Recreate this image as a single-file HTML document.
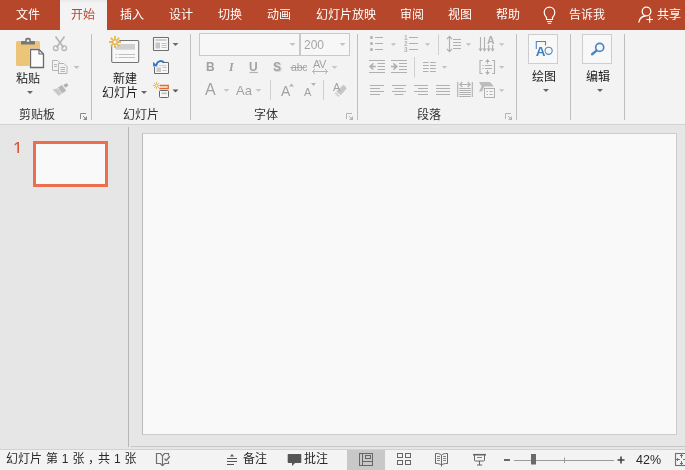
<!DOCTYPE html>
<html lang="zh-CN">
<head>
<meta charset="utf-8">
<title>PowerPoint</title>
<style>
*{margin:0;padding:0;box-sizing:border-box}
html,body{width:685px;height:470px;overflow:hidden;background:#e6e6e6}
body{position:relative;font-weight:350;font-family:"Liberation Sans","Noto Sans CJK SC",sans-serif;font-size:12px;color:#262626}
.abs{position:absolute}
#tabs{left:0;top:0;width:685px;height:30px;background:#b7472a}
.tab{position:absolute;font-weight:400;top:2px;height:27px;line-height:27px;color:#fff;font-size:12px;white-space:nowrap}
#tab-active{left:60px;top:0;width:47px;height:30px;background:#f3f3f3;border-top:2px solid #ececec}
#ribbon{left:0;top:30px;width:685px;height:95px;background:#f3f3f3;border-bottom:1px solid #d2d2d2}
.sep{position:absolute;top:34px;width:1px;height:86px;background:#bebebe}
.glabel{position:absolute;top:106px;height:18px;line-height:18px;font-size:12px;color:#333;font-weight:400;white-space:nowrap}
.btxt{position:absolute;font-size:12px;line-height:14px;color:#1c1c1c;font-weight:400;white-space:nowrap}
.g{color:#a2a2a2}
.tab,.btxt,.glabel,.st,.g,#num,.gs{will-change:transform}
.dd{position:absolute;width:0;height:0;border-left:3px solid transparent;border-right:3px solid transparent;border-top:3px solid #b5b5b5}
.ddk{border-top-color:#666}
#panel{left:0;top:125px;width:129px;height:324px;background:#e6e6e6}
#pdiv{left:128px;top:127px;width:1px;height:320px;background:#b6b6b6}
#work{left:129px;top:125px;width:556px;height:324px;background:#e6e6e6}
#slide{left:142px;top:133px;width:535px;height:302px;background:#f9f9f9;border:1px solid #cbcbcb;border-left-color:#bbb}
#thumb{left:33px;top:141px;width:75px;height:46px;background:#f9f9f9;border:3px solid #ed6e4e}
#num{left:12.5px;top:139px;width:10px;height:14px;overflow:hidden;font-size:17.5px;line-height:17px;color:#d8532f}
#num span{position:absolute;left:0;top:1.5px}
#status{left:0;top:449px;width:685px;height:21px;background:#f3f3f3;border-top:1px solid #d2d2d2}
#wline{left:131px;top:446px;width:554px;height:1px;background:#c6c6c6}
.st{position:absolute;top:449px;height:21px;line-height:20px;font-size:12px;color:#2a2a2a;font-weight:400;white-space:nowrap}
svg{position:absolute;overflow:visible}
</style>
</head>
<body>
<div id="tabs" class="abs"></div>
<div id="tab-active" class="abs"></div>
<div class="tab" style="left:16px">文件</div>
<div class="tab" style="left:71px;color:#b7472a;font-weight:400">开始</div>
<div class="tab" style="left:120px">插入</div>
<div class="tab" style="left:169px">设计</div>
<div class="tab" style="left:218px">切换</div>
<div class="tab" style="left:267px">动画</div>
<div class="tab" style="left:316px">幻灯片放映</div>
<div class="tab" style="left:399.500px">审阅</div>
<div class="tab" style="left:447.500px">视图</div>
<div class="tab" style="left:496px">帮助</div>
<div class="tab" style="left:569px">告诉我</div>
<div class="tab" style="left:657px">共享</div>

<div id="ribbon" class="abs"></div>
<div class="sep" style="left:91px"></div>
<div class="sep" style="left:190px"></div>
<div class="sep" style="left:357px"></div>
<div class="sep" style="left:516px"></div>
<div class="sep" style="left:570px"></div>
<div class="sep" style="left:624px"></div>

<div class="btxt" style="left:16px;top:71.500px">粘贴</div>
<div class="dd ddk" style="left:26.500px;top:90.500px"></div>
<div class="glabel" style="left:19px">剪贴板</div>

<div class="btxt" style="left:112.500px;top:71.500px">新建</div>
<div class="btxt" style="left:102px;top:86px">幻灯片</div>
<div class="dd ddk" style="left:141px;top:91px"></div>
<div class="glabel" style="left:123px">幻灯片</div>

<div class="glabel" style="left:254px">字体</div>
<div class="glabel" style="left:417px">段落</div>

<div class="btxt" style="left:532px;top:70px">绘图</div>
<div class="dd ddk" style="left:542.500px;top:89px"></div>
<div class="btxt" style="left:586px;top:70px">编辑</div>
<div class="dd ddk" style="left:596.500px;top:89px"></div>


<div id="panel" class="abs"></div>
<div id="pdiv" class="abs"></div>
<div id="work" class="abs"></div>
<div id="slide" class="abs"></div>
<div id="thumb" class="abs"></div>
<div id="num" class="abs"><span>1</span></div>

<div id="wline" class="abs"></div>
<div id="status" class="abs"></div>
<div class="st" style="left:6px;word-spacing:.6px">幻灯片 第 1 张<span style="margin-left:3.500px;margin-right:-2px">，</span>共 1 张</div>
<div class="st" style="left:243px">备注</div>
<div class="st" style="left:304px">批注</div>
<div class="st" style="left:636px;top:449.600px;font-size:12.500px">42%</div>

<svg id="icons" width="685" height="470" viewBox="0 0 685 470" style="left:0;top:0" fill="none">
<!-- ===== tab bar icons ===== -->
<g stroke="#fff" stroke-width="1.2" fill="none">
  <path d="M546.5 17.5c-1.6-1.6-2.3-3-2.3-5 0-3 2.3-5.3 5.3-5.3s5.300 2.300 5.300 5.300c0 2-.7 3.400-2.300 5v2h-6z"/>
  <path d="M547 21.500h5M547.800 23.300h3.400" stroke-width="1"/>
</g>
<g stroke="#fff" stroke-width="1.300" fill="none">
  <circle cx="646.500" cy="11.500" r="4.300"/>
  <path d="M638.800 22.500c.6-4 3-6.300 6.700-6.500"/>
  <path d="M646.500 19.500h6.500M649.700 16.300v6.500" stroke-width="1.200"/>
</g>

<!-- ===== clipboard group ===== -->
<rect x="16" y="41" width="24" height="25" rx="1.500" fill="#ecc578"/>
<path d="M21 44.600v-2.600q0-.9.900-.9h3.300v-1.500q0-1.900 1.900-1.900h1.800q1.900 0 1.900 1.900v1.500h3.300q.9 0 .9.900v2.600z" fill="#787878"/>
<rect x="26.800" y="39.700" width="2.400" height="2" fill="#f3f3f3"/>
<path d="M29.500 48.500h9.800l5.200 5v15h-15z" fill="#f3f3f3"/><path d="M30.500 49.500h8.500l4.500 4.500v13.500h-13z" fill="#fbfbfb" stroke="#6a6a6a" stroke-width="1.300"/>
<path d="M39 49.500v4.500h4.500" stroke="#6a6a6a" stroke-width="1.100"/>
<!-- scissors -->
<g stroke="#b4b4b4" stroke-width="1.300" fill="none">
  <path d="M55.500 36.500l8 11M64.500 36.500l-8 11" stroke-width="1.600"/>
  <circle cx="55.800" cy="48.200" r="2.300"/>
  <circle cx="64.200" cy="48.200" r="2.300"/>
</g>
<!-- copy -->
<g stroke="#b4b4b4" stroke-width="1" fill="#f3f3f3">
  <path d="M52.500 60.500h5l2 2v8h-7z"/>
  <path d="M54 64.500h3M54 66.500h3" />
  <path d="M58.500 63.500h5.500l3 3v7h-8.500z"/>
  <path d="M60.500 67.500h4.500M60.500 69.500h4.500M60.500 71.500h4.500"/>
</g>
<path d="M73.500 66h6l-3 3z" fill="#c0c0c0"/>
<!-- format painter -->
<g fill="#c2c2c2">
  <path d="M63.500 85l3.200-2 1.800 2.600-3.200 2.200z" fill="#b0b0b0"/>
  <path d="M58 87.500l4-2.600 4.200 5.800-4 2.700z" fill="#b8b8b8"/>
  <path d="M52.500 89.500l5.500-1.200 3.800 5.300-3 2.400z" fill="#c9c9c9"/>
</g>
<!-- dialog launchers -->
<path d="M80.500 119v-5.500h5.500" stroke="#8c8c8c" fill="none"/><path d="M83 116l3 3" stroke="#8c8c8c"/><path d="M87 116v4h-4z" fill="#8c8c8c"/>
<path d="M346.500 119v-5.500h5.500" stroke="#b4b4b4" fill="none"/><path d="M349 116l3 3" stroke="#b4b4b4"/><path d="M353 116v4h-4z" fill="#b4b4b4"/>
<path d="M505.500 119v-5.500h5.500" stroke="#b4b4b4" fill="none"/><path d="M508 116l3 3" stroke="#b4b4b4"/><path d="M512 116v4h-4z" fill="#b4b4b4"/>

<!-- ===== slides group ===== -->
<rect x="111.700" y="40.500" width="27" height="22" rx="1.200" fill="#f8f8f8" stroke="#747474" stroke-width="1.100"/>
<rect x="115.300" y="44" width="19.700" height="5.700" fill="#d0d0d0"/>
<path d="M115.500 54.500h1.500M118.500 54.500h16.500M115.500 57.500h1.500M118.500 57.500h16.500" stroke="#c0c0c0" stroke-width="1.100"/>
<circle cx="115" cy="42" r="4.600" fill="#f3f3f3"/>
<g stroke="#e8b754" stroke-width="1.800">
  <path d="M115 36v12M109 42h12M110.800 37.800l8.400 8.400M119.200 37.800l-8.400 8.400"/>
</g>
<circle cx="115" cy="42" r="2" fill="#f8f8f8" stroke="#e8b754" stroke-width="1"/>
<!-- layout -->
<rect x="153.500" y="37.500" width="15" height="13" rx=".6" fill="#f8f8f8" stroke="#6e6e6e" stroke-width="1.100"/>
<path d="M155.500 40h11" stroke="#bdbdbd" stroke-width="1.400"/>
<rect x="155.500" y="42.500" width="4.500" height="6" fill="#c6c6c6"/>
<path d="M161.500 43.500h5M161.500 45.500h5M161.500 47.500h5" stroke="#c0c0c0" stroke-width="1"/>
<path d="M172.500 43h6l-3 3z" fill="#6a6a6a"/>
<!-- reset -->
<path d="M162.500 62.500h6v11h-14v-6.500" stroke="#6a6a6a" stroke-width="1" fill="#f8f8f8"/>
<path d="M159 65.500h7.500" stroke="#d0d0d0" stroke-width="1.200"/>
<rect x="156.500" y="67.500" width="4.500" height="4.500" fill="#cacaca"/>
<path d="M162.500 67.500h4M162.500 70.500h4" stroke="#c0c0c0" stroke-width="1"/>
<path d="M156.500 65c.3-3.500 4.500-5.500 7.500-2.500" stroke="#2f78c8" stroke-width="1.800" fill="none"/>
<path d="M153 61.800l.2 4.800 4.800-.4z" fill="#2f78c8"/>
<!-- section -->
<g stroke="#e9b850" stroke-width="1">
  <path d="M156.500 81.800v7.400M152.800 85.500h7.400M153.900 82.900l5.200 5.200M159.100 82.900l-5.200 5.200"/>
</g>
<circle cx="156.500" cy="85.500" r="1.300" fill="#f6f6f6" stroke="#e9b850" stroke-width=".8"/>
<path d="M160 85.500h8.300v3h-9" stroke="#e36c2a" stroke-width="1.300" fill="none"/>
<rect x="159.500" y="90.500" width="9" height="7" rx=".8" fill="#f8f8f8" stroke="#666" stroke-width="1"/>
<path d="M161.500 93.300h5.500" stroke="#c4c4c4" stroke-width="1.800"/>
<path d="M172.500 89.500h6l-3 3z" fill="#5a5a5a"/>

<!-- ===== font group ===== -->
<rect x="199.500" y="33.500" width="100" height="22" fill="#f7f7f7" stroke="#c8c8c8"/>
<rect x="300.500" y="33.500" width="49" height="22" fill="#f7f7f7" stroke="#c8c8c8"/>
<path d="M289.500 43h6l-3 3z" fill="#c4c4c4"/>
<path d="M339.500 43h6l-3 3z" fill="#c4c4c4"/>
<path d="M249.500 72.500h8.500" stroke="#b4b4b4" stroke-width="1.200"/>
<path d="M290 67.500h16.500" stroke="#b4b4b4" stroke-width="1"/>
<g stroke="#b4b4b4" stroke-width="1" fill="none">
  <path d="M312.500 71.500h15M315 69l-2.500 2.500 2.500 2.500M325 69l2.500 2.500-2.500 2.500"/>
</g>
<path d="M331.500 66h6l-3 3z" fill="#c8c8c8"/>
<path d="M223.500 89h6l-3 3z" fill="#c8c8c8"/>
<path d="M255.500 89h6l-3 3z" fill="#c8c8c8"/>
<path d="M270.500 80v20M323.500 80v20" stroke="#cfcfcf" stroke-width="1"/>
<path d="M289 86.500h5l-2.500-3z" fill="#b4b4b4"/>
<path d="M311 83h5l-2.500 3z" fill="#b4b4b4"/>
<path d="M343.600 85.100L346.400 88.200L340.800 94.800L336.700 91.500Z" fill="#c6c6c6" stroke="#c6c6c6" stroke-width=".8" stroke-linejoin="round"/>
<path d="M335.600 92.200L339.800 95.800L338.400 96.900L334.600 93.300Z" fill="#d0d0d0"/>

<!-- ===== paragraph group ===== -->
<g fill="#b0b0b0">
  <circle cx="371.500" cy="37.500" r="1.500"/><circle cx="371.500" cy="43.500" r="1.500"/><circle cx="371.500" cy="49.500" r="1.500"/>
</g>
<g stroke="#b0b0b0" stroke-width="1.150">
  <path d="M375 37.500h8M375 43.500h8M375 49.500h8"/>
  <path d="M409 37.500h9M409 43.500h9M409 49.500h9"/>
</g>
<path d="M390.800 43.200h5.400l-2.700 2.800z" fill="#c2c2c2"/>
<path d="M424.800 43.200h5.400l-2.700 2.800z" fill="#c2c2c2"/>
<path d="M438.500 34.500v20.500M414.500 57v20.500" stroke="#cfcfcf"/>
<!-- indent -->
<g stroke="#b0b0b0" stroke-width="1.150" fill="none">
  <path d="M369 60.500h16M377.500 63.500h7.500M377.500 66.500h7.500M377.500 69.500h7.500M369 72.500h16"/>
  <path d="M370 66.500h5.800" stroke-width="1.600"/>
  <path d="M391 60.500h16M399 63.500h8M399 66.500h8M399 69.500h8M391 72.500h16"/>
  <path d="M391 66.500h5.500" stroke-width="1.600"/>
</g>
<path d="M368.800 66.500l3.600-3.300h1.600l-2 3.300 2 3.300h-1.600z" fill="#b0b0b0"/>
<path d="M398 66.500l-3.600-3.300h-1.600l2 3.300-2 3.300h1.600z" fill="#b0b0b0"/>
<!-- columns -->
<g stroke="#b0b0b0" stroke-width="1.150">
  <path d="M423 62.500h5.600M430 62.500h5.800M423 65.500h5.600M430 65.500h5.800M423 68.500h5.600M430 68.500h5.800M423 71.500h5.600M430 71.500h5.800"/>
</g>
<path d="M441.800 66h5.400l-2.700 2.800z" fill="#c2c2c2"/>
<!-- aligns -->
<g stroke="#b0b0b0" stroke-width="1.150">
  <path d="M370 85.500h14M370 88.500h10M370 91.500h14M370 94.500h10"/>
  <path d="M392 85.500h14M394.500 88.500h9M392 91.500h14M394.500 94.500h9"/>
  <path d="M414 85.500h14M418 88.500h10M414 91.500h14M418 94.500h10"/>
  <path d="M436 85.500h14M436 88.500h14M436 91.500h14M436 94.500h14"/>
</g>
<!-- distributed -->
<g stroke="#b0b0b0" stroke-width="1.100" fill="none">
  <path d="M457.700 82v15M472.300 82v15"/>
  <path d="M460 84.500h10M462.300 82l-2.500 2.500 2.500 2.500M467.700 82l2.500 2.500-2.500 2.500"/>
  <path d="M459.300 88.500h11.500M459.300 90.500h11.500M459.300 92.500h11.500M459.300 94.500h11.500M459.300 96.500h11.500" stroke-width="1"/>
</g>
<!-- line spacing -->
<g stroke="#b0b0b0" stroke-width="1.150" fill="none">
  <path d="M449.500 37v14"/>
  <path d="M447 39l2.500-2.600 2.500 2.600M447 49l2.500 2.600 2.500-2.600"/>
  <path d="M453 39.500h8M453 42.500h8M453 45.500h8M453 48.500h8"/>
</g>
<path d="M465.800 43.200h5.400l-2.700 2.800z" fill="#c2c2c2"/>
<!-- text direction -->
<g stroke="#b0b0b0" stroke-width="1.100" fill="none">
  <path d="M480.500 37v14M484.500 37v14"/>
  <path d="M488.700 45v6M492.600 45v6"/>
</g>
<g fill="#b0b0b0">
  <path d="M478.500 48.500h4l-2 3.200zM482.500 48.500h4l-2 3.200zM486.800 48.500h3.800l-1.900 3.200zM490.700 48.500h3.800l-1.900 3.200z"/>
</g>
<path d="M499 43.200h5.400l-2.700 2.800z" fill="#c2c2c2"/>
<!-- align text -->
<g stroke="#b0b0b0" stroke-width="1.100" fill="none">
  <path d="M482.500 60.500h-2.500v13h2.500M492 60.500h2.500v13h-2.500"/>
  <path d="M487.500 59.800v3.700M487.500 70v4"/>
  <path d="M485 65.500h7M485 68.500h7"/>
  <path d="M482.500 65.500h1.200M482.500 68.500h1.200"/>
</g>
<path d="M485.200 62h4.600l-2.300-3zM485.200 72h4.600l-2.300 3z" fill="#b0b0b0"/>
<path d="M499 66h5.400l-2.700 2.800z" fill="#c2c2c2"/>
<!-- smartart -->
<path d="M479 82h11l4 4.500h-9.500l-2.500 5h-3l2.500-5z" fill="#bdbdbd"/>
<rect x="484.500" y="88.500" width="10" height="9" fill="#f5f5f5" stroke="#b0b0b0"/>
<path d="M486.500 91.500h1.500M489.500 91.500h3M486.500 94.500h1.500M489.500 94.500h3" stroke="#b0b0b0"/>
<path d="M499 89.200h5.400l-2.700 2.800z" fill="#c2c2c2"/>

<!-- ===== drawing / editing ===== -->
<rect x="528.500" y="34.500" width="29" height="29" fill="#f8f8f8" stroke="#cdcdcd"/>
<rect x="582.500" y="34.500" width="29" height="29" fill="#f8f8f8" stroke="#cdcdcd"/>
<path d="M536.300 49v-7.500h9.200v4" stroke="#4a86c5" stroke-width="1.100" fill="none"/>
<circle cx="548.600" cy="50.800" r="3.600" stroke="#4a86c5" stroke-width="1.100" fill="#f8f8f8"/>
<circle cx="599.700" cy="47.400" r="4" stroke="#4a86c5" stroke-width="1.700" fill="#f8f8f8"/>
<path d="M596.500 50.600l-4.400 3.600" stroke="#4a86c5" stroke-width="2.400" stroke-linecap="round"/>

<!-- ===== status bar ===== -->
<rect x="347" y="450" width="38" height="20" fill="#c8c8c8"/>
<g stroke="#707070" stroke-width="1.200" fill="none" stroke-linejoin="miter">
  <path d="M162.500 455.800l-2-2.300h-4v10h4l2 2.300"/>
  <path d="M162.500 455.500v10.500"/>
  <path d="M162.500 455.800l2-2.300h4v2.200M168.500 461.300v2.200h-4l-2 2.300"/>
  <path d="M164.600 458.800l1.700 1.700 3.500-4.200" stroke-width="1.400"/>
</g>
<g stroke="#555" stroke-width="1" fill="none">
  <path d="M227 458.500h10M227 461.500h10M227 464.500h7"/>
</g>
<path d="M230 456.500h4l-2-2.500z" fill="#555"/>
<path d="M288 454h12.500q.8 0 .8.800v7.400q0 .8-.8.800h-5.500l-3 3v-3h-3.500q-.8 0-.8-.8v-7.400q0-.8.800-.8z" fill="#555"/>
<!-- normal view -->
<g stroke="#666" stroke-width="1" fill="none">
  <rect x="359.500" y="453.500" width="13" height="12"/>
  <path d="M362.500 453.500v12M362.500 461.500h10"/>
  <rect x="365.500" y="455.500" width="5" height="3"/>
</g>
<!-- sorter -->
<g stroke="#666" stroke-width="1" fill="none">
  <rect x="397.500" y="453.500" width="5" height="4"/><rect x="405.500" y="453.500" width="5" height="4"/>
  <rect x="397.500" y="460.500" width="5" height="4"/><rect x="405.500" y="460.500" width="5" height="4"/>
</g>
<!-- reading -->
<g stroke="#666" stroke-width="1" fill="none">
  <path d="M441.500 455c-1.500-1.200-3.500-1.600-6-1.500v10c2.500-.1 4.500.3 6 1.500c1.500-1.200 3.500-1.600 6-1.500v-10c-2.500-.1-4.500.3-6 1.500zM441.500 455v11.500"/>
  <path d="M437 456.500h3M437 458.500h3M437 460.500h3M443 456.500h3M443 458.500h3M443 460.500h3" stroke-width=".8"/>
</g>
<!-- slideshow -->
<g stroke="#666" stroke-width="1" fill="none">
  <path d="M473 454.700h13" stroke-width="1.600"/><path d="M474.500 455v5q0 1 1 1h8q1 0 1-1v-5M479.500 461v4M477 465h5.200"/>
  <path d="M477 457.500h5" stroke-width=".8"/>
</g>
<!-- zoom -->
<path d="M504 460h6" stroke="#444" stroke-width="1.600"/>
<path d="M514 460.500h100" stroke="#9a9a9a" stroke-width="1"/>
<path d="M564.500 457.500v5.500" stroke="#9a9a9a" stroke-width="1"/>
<rect x="531" y="454" width="5" height="10.500" fill="#6a6a6a"/>
<path d="M617.500 460h7M621 456.500v7" stroke="#444" stroke-width="1.600"/>
<g stroke="#707070" stroke-width="1" fill="none">
  <rect x="675.500" y="453.500" width="12" height="12" stroke-width="1.100"/>
  <path d="M681.500 454v4M681.500 461v4M676 459.500h4M683 459.500h4"/>
  <path d="M680 455.500h3M680 463.500h3M677.500 458v3M685.500 458v3"/>
</g>
</svg>
<div class="abs g" style="left:303.500px;top:38px;font-size:12px;line-height:14px;color:#a6a6a6">200</div>
<div class="abs g" style="left:205.500px;top:60px;font-size:12px;line-height:14px;font-weight:bold">B</div>
<div class="abs g" style="left:228.500px;top:60px;font-size:12px;line-height:14px;font-style:italic;font-family:'Liberation Serif',serif;font-weight:bold">I</div>
<div class="abs g" style="left:249px;top:60px;font-size:12px;line-height:14px;font-weight:bold">U</div>
<div class="abs g" style="left:272.500px;top:60px;font-size:12px;line-height:14px;font-weight:bold;text-shadow:1px 1px 1px #d0d0d0">S</div>
<div class="abs g" style="left:290.500px;top:60px;font-size:10.500px;line-height:14px;letter-spacing:-.2px">abc</div>
<div class="abs g" style="left:313px;top:57px;font-size:11px;line-height:14px;letter-spacing:-0.5px">AV</div>
<div class="abs g" style="left:204.500px;top:80.500px;font-size:16px;line-height:18px">A</div>
<div class="abs g" style="left:236px;top:82.500px;font-size:13px;line-height:16px">Aa</div>
<div class="abs g" style="left:281px;top:83px;font-size:14px;line-height:16px">A</div>
<div class="abs g" style="left:304px;top:85px;font-size:11px;line-height:14px">A</div>
<div class="abs g" style="left:332.500px;top:81px;font-size:11px;line-height:12px">A</div>
<div class="abs g" style="left:403.500px;top:35px;font-size:6.500px;line-height:6px;font-weight:bold;color:#b4b4b4">1<br>2<br>3</div>
<div class="abs g" style="left:487px;top:33.500px;font-size:10.500px;line-height:12px;font-weight:bold;color:#b0b0b0">A</div>
<div class="abs" style="left:535.800px;top:45px;font-size:13.500px;line-height:14px;font-weight:bold;color:#3e7fc1;text-shadow:1px 0 0 #f8f8f8">A</div>

</body>
</html>
